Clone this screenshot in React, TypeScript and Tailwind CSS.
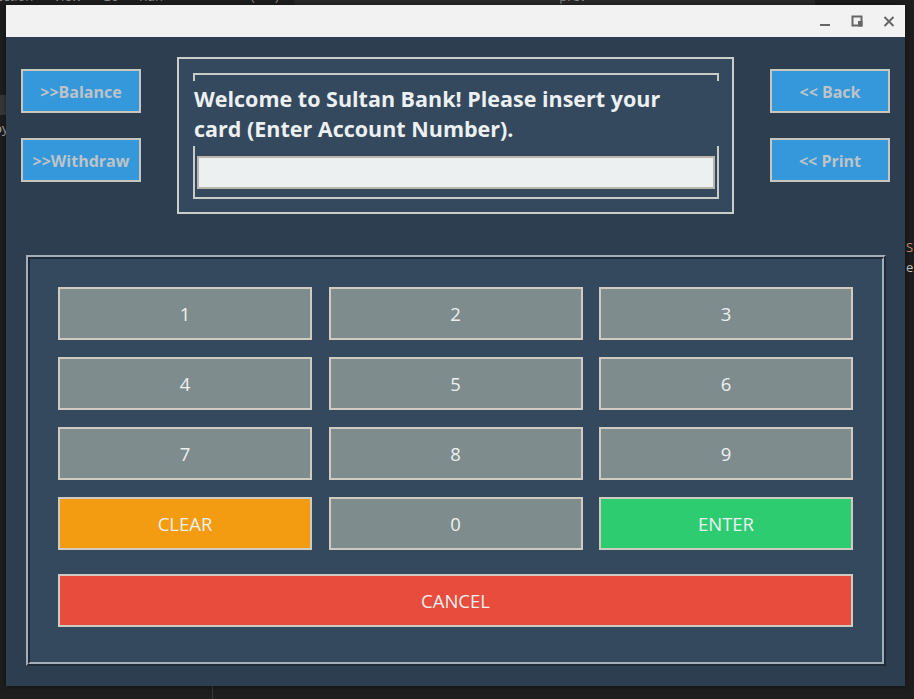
import React from 'react';

const KEYS = ['1', '2', '3', '4', '5', '6', '7', '8', '9'];

function SideButton({ label }: { label: string }) {
  return (
    <button className="flex h-[44px] w-[120px] items-center justify-center border-2 border-[#c9c6bc] bg-[#3498db] pt-[2px] text-[16px] font-bold text-[#bdc3c7]">
      {label}
    </button>
  );
}

function KeyButton({ label, color = 'bg-[#7f8c8d]' }: { label: string; color?: string }) {
  return (
    <button
      className={`flex h-[53px] items-center justify-center border-2 border-[#cfcbc0] pt-[1px] text-[18.5px] text-[#ecf0f1] ${color}`}
    >
      {label}
    </button>
  );
}

function TitleBar() {
  return (
    <div className="flex h-[32px] items-center justify-end bg-[#f2f2f2]">
      {/* minimize */}
      <div className="flex h-[32px] w-[32px] items-center justify-center">
        <svg width="12" height="12" viewBox="0 0 12 12">
          <rect x="1" y="9" width="10" height="2" fill="#666666" />
        </svg>
      </div>
      {/* maximize */}
      <div className="flex h-[32px] w-[32px] items-center justify-center">
        <svg width="12" height="12" viewBox="0 0 12 12">
          <rect x="1.5" y="1.5" width="9" height="9" fill="none" stroke="#666666" strokeWidth="2" />
          <rect x="7" y="6" width="4.5" height="5.5" fill="#666666" />
        </svg>
      </div>
      {/* close */}
      <div className="flex h-[32px] w-[32px] items-center justify-center">
        <svg width="12" height="12" viewBox="0 0 12 12">
          <path d="M1.5 2 L10.5 11 M10.5 2 L1.5 11" stroke="#666666" strokeWidth="2" />
        </svg>
      </div>
    </div>
  );
}

export default function App() {
  return (
    <div
      className="relative h-[699px] w-[914px] overflow-hidden bg-[#1e1e1e]"
      style={{ fontFamily: '"Open Sans", "Noto Sans", sans-serif' }}
    >
      {/* desktop fragments behind the window */}
      <div className="absolute left-0 top-0 h-[5px] w-[294px] overflow-hidden bg-[#1f1f1f]">
        <div className="-mt-[12px] flex gap-[20px] whitespace-nowrap text-[13px] leading-[16px] text-[#8a8a8a]">
          <span className="-ml-[4px]">ection</span>
          <span>View</span>
          <span>Go</span>
          <span>Run</span>
          <span className="ml-[68px]">(&nbsp;&nbsp;&nbsp;&nbsp;&nbsp;&nbsp;)</span>
        </div>
      </div>
      <div className="absolute left-[294px] top-0 h-[5px] w-[521px] overflow-hidden bg-[#2a2a2a]">
        <div className="-mt-[12px] ml-[258px] whitespace-nowrap text-[13px] leading-[16px] text-[#8a8a8a]">
          › prev
        </div>
      </div>
      <div className="absolute left-0 top-[95px] h-[20px] w-[6px] bg-[#383838]" />
      <div className="absolute left-0 top-[120px] w-[6px] overflow-hidden text-[13px] leading-[16px] text-[#b0b0b0]">
        <span className="-ml-[6px] block">py</span>
      </div>
      <div className="absolute left-[906px] top-[237px] text-[13px] leading-[20px]">
        <div className="text-[#ce9178]">S</div>
        <div className="text-[#c8c8c8]">e</div>
      </div>
      <div className="absolute left-[212px] top-[686px] h-[13px] w-px bg-[#3a3a3a]" />

      {/* application window */}
      <div className="absolute left-[6px] top-[5px] w-[899px] shadow-[0_0_6px_rgba(0,0,0,0.5)]">
        <TitleBar />
        <div className="bg-[#2c3e50] px-[15px] pb-[20px] pt-[20px]">
          <div className="flex items-start justify-between">
            <div className="mt-[12px] flex flex-col gap-[25px]">
              <SideButton label=">>Balance" />
              <SideButton label=">>Withdraw" />
            </div>

            <div className="h-[157px] w-[557px] border-2 border-[#cbcdc8] bg-[#34495e] pl-[14px] pr-[13px] pt-[14px]">
              <div className="h-[126px] border-2 border-[#c9cbc6] pt-[6px]">
                <div className="-mx-[2px] flex h-[65px] items-center bg-[#34495e] pl-[1px] text-[21.5px] font-bold leading-[30px] text-[#ecf0f1]">
                  <p>
                    Welcome to Sultan Bank! Please insert your
                    <br />
                    card (Enter Account Number).
                  </p>
                </div>
                <div className="mx-[2px] mt-[10px] h-[33px] border-2 border-[#b9b6ad] bg-[#ecf0f1]" />
              </div>
            </div>

            <div className="mt-[12px] flex flex-col gap-[25px]">
              <SideButton label="<< Back" />
              <SideButton label="<< Print" />
            </div>
          </div>

          {/* keypad panel */}
          <div className="ml-[5px] mr-[4px] mt-[41px] border-2 border-b-[#1f2b38] border-l-[#a3aeb9] border-r-[#1f2b38] border-t-[#a3aeb9]">
            <div className="border-2 border-b-[#a3aeb9] border-l-[#1f2b38] border-r-[#a3aeb9] border-t-[#1f2b38] bg-[#34495e] pb-[35px] pl-[28px] pr-[29px] pt-[28px]">
              <div className="grid grid-cols-3 gap-x-[16.5px] gap-y-[17px]">
                {KEYS.map((k) => (
                  <KeyButton key={k} label={k} />
                ))}
                <KeyButton label="CLEAR" color="bg-[#f39c12]" />
                <KeyButton label="0" />
                <KeyButton label="ENTER" color="bg-[#2ecc71]" />
              </div>
              <div className="mt-[24px] grid">
                <KeyButton label="CANCEL" color="bg-[#e74c3c]" />
              </div>
            </div>
          </div>
        </div>
      </div>
    </div>
  );
}
